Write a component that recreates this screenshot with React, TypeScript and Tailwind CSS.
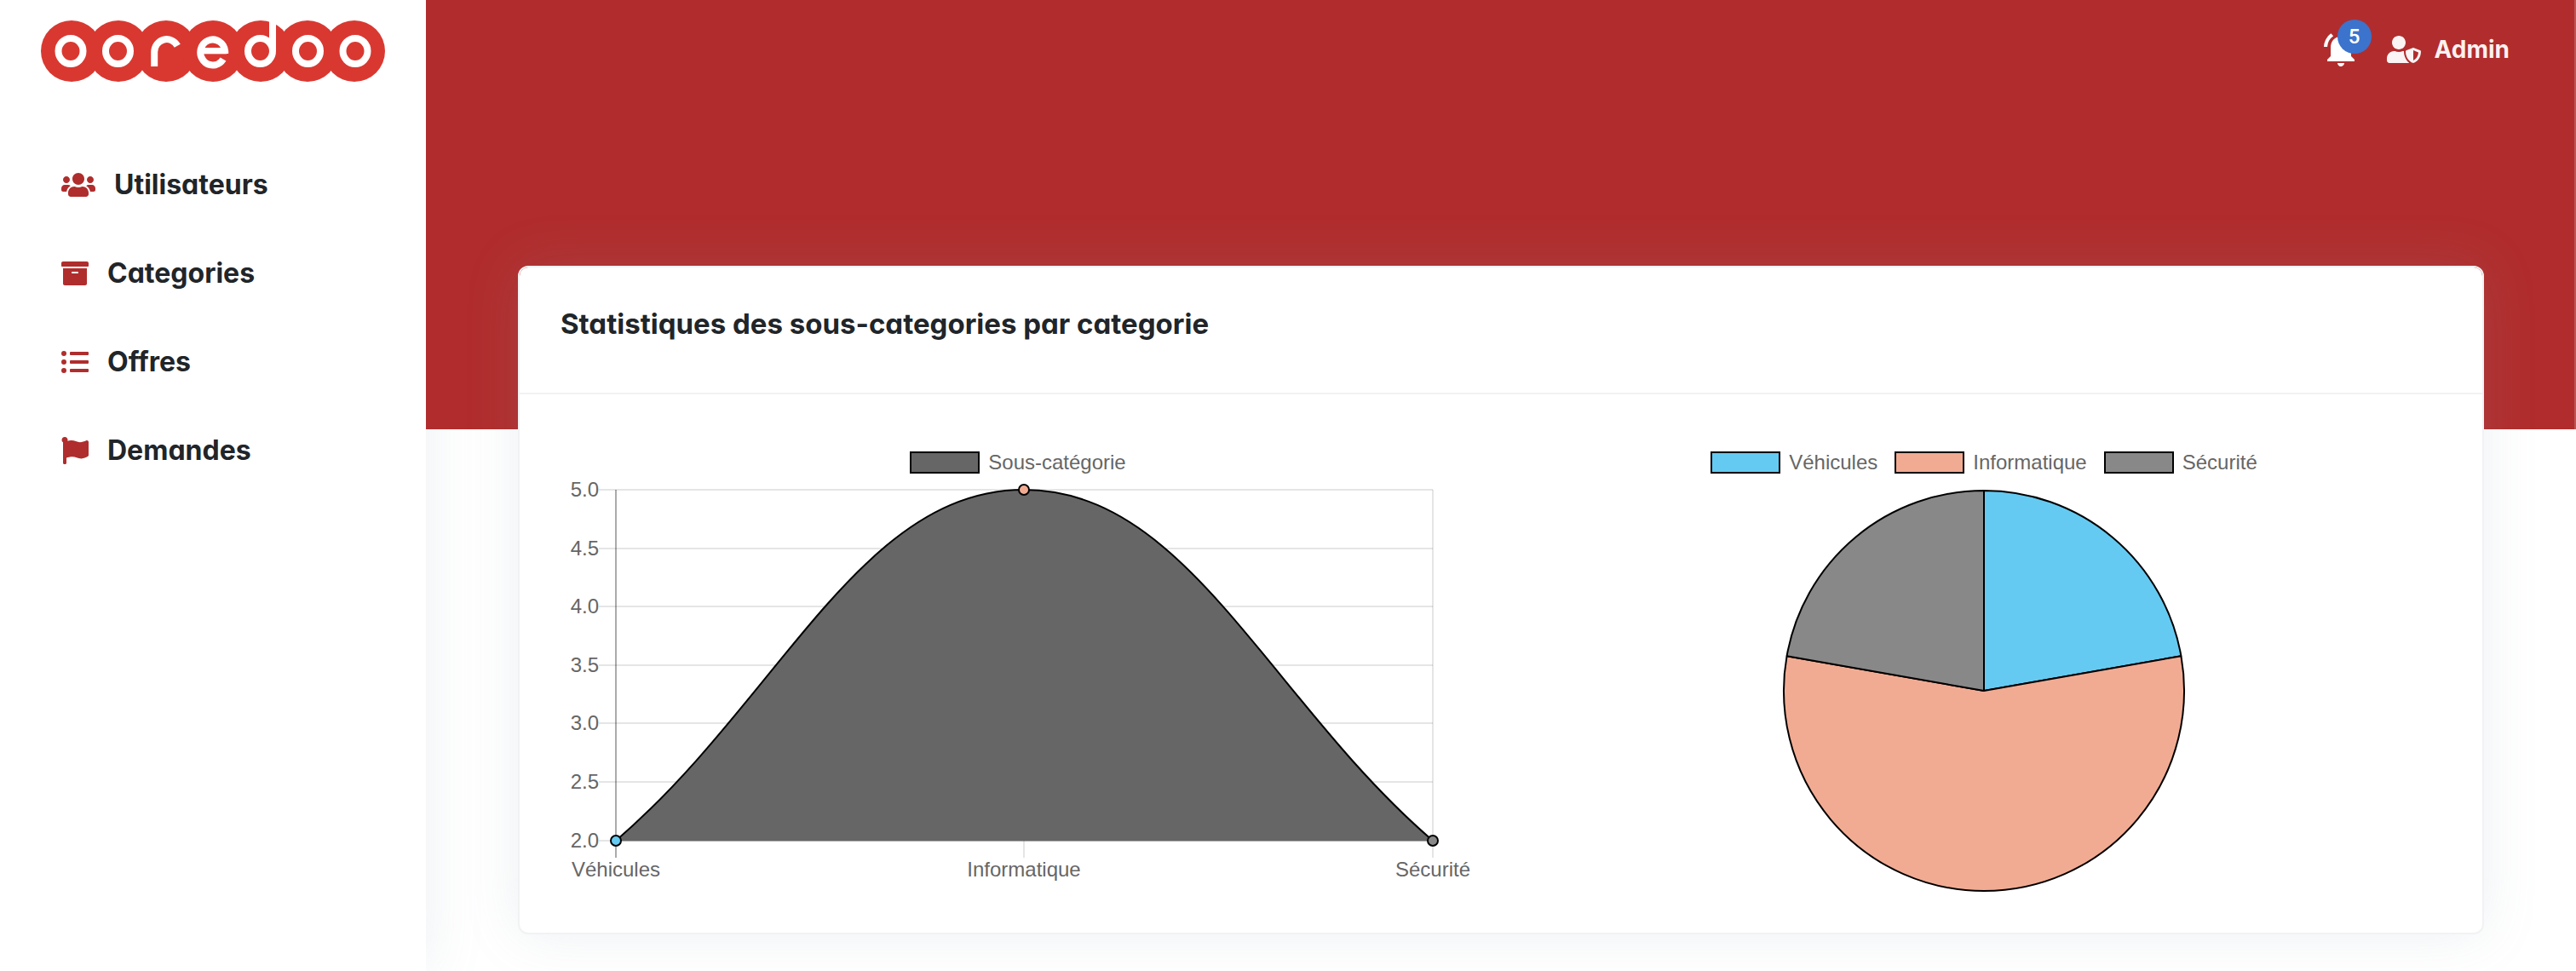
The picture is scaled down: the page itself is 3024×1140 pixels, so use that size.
import type { ReactNode } from "react";
import { FaArchive, FaFlag, FaListUl, FaUserShield, FaUsers } from "react-icons/fa";
import { MdNotificationsActive } from "react-icons/md";

const BLUE = "#65caf1";
const SALMON = "#f2ab93";
const GREY = "#888888";

const navItems = [
  { label: "Utilisateurs", icon: <FaUsers className="h-8 w-10" /> },
  { label: "Categories", icon: <FaArchive className="size-8" /> },
  { label: "Offres", icon: <FaListUl className="size-8" /> },
  { label: "Demandes", icon: <FaFlag className="size-8" /> },
];

function Logo() {
  const discs = [36, 91, 147, 202, 258, 313, 368];
  const rings = [35, 90.5, 257.5, 313.5, 369];
  return (
    <svg viewBox="0 0 404 72" className="h-[72px] w-[404px]" role="img" aria-label="ooredoo">
      {discs.map((x) => (
        <circle key={x} cx={x} cy="36" r="36" fill="#d93831" />
      ))}
      <g fill="none" stroke="#fff" strokeWidth="8">
        {rings.map((x) => (
          <ellipse key={x} cx={x} cy="36" rx="14.5" ry="15" />
        ))}
        <path d="M133.2 54V37A14.5 15 0 0 1 160.3 29.7" />
        <path d="M216.2 39V36A14.5 15 0 1 0 214 45.5" />
        <path d="M190 35.7H218" strokeWidth="7.3" />
        <path d="M272 1V36" />
      </g>
    </svg>
  );
}

function Sidebar() {
  return (
    <aside className="w-[500px] shrink-0 bg-white shadow-[0_0_64px_0_rgba(136,152,170,0.15)]">
      <a href="#" className="mt-6 ml-12 block w-fit">
        <Logo />
      </a>
      <nav className="mt-[69px] flex flex-col">
        {navItems.map((item) => (
          <a
            key={item.label}
            href="#"
            className="flex h-[104px] items-center gap-[22px] pl-[72px] text-[32px] font-bold text-[#212529]"
          >
            <span className="text-[#b02d2d]">{item.icon}</span>
            {item.label}
          </a>
        ))}
      </nav>
    </aside>
  );
}

function Header() {
  return (
    <header className="relative h-[504px] border-r-2 border-[#bd5454] bg-[#b12d2d]">
      <div className="flex items-start justify-end gap-[18px] pt-[34px] pr-[76px] text-white">
        <button type="button" aria-label="Notifications" className="relative w-[60px]">
          <MdNotificationsActive className="size-12" />
          <span className="absolute -top-[11px] right-0 flex size-10 items-center justify-center rounded-full bg-[#3b73cd] font-[Roboto] text-2xl font-medium">
            5
          </span>
        </button>
        <button type="button" className="flex h-12 items-center gap-4 text-[28px] font-bold text-white/95">
          <FaUserShield className="h-8 w-10" />
          Admin
        </button>
      </div>
    </header>
  );
}

function Legend({ items }: { items: { label: string; color: string }[] }) {
  return (
    <ul className="flex h-6 justify-center gap-5">
      {items.map((item) => (
        <li key={item.label} className="flex items-center gap-[10px] text-2xl leading-6 text-[#666]">
          <span className="h-[26px] w-[82px] border-2 border-black" style={{ backgroundColor: item.color }} />
          {item.label}
        </li>
      ))}
    </ul>
  );
}

const yTicks = [
  { label: "5.0", y: 15 },
  { label: "4.5", y: 84 },
  { label: "4.0", y: 152 },
  { label: "3.5", y: 221 },
  { label: "3.0", y: 289 },
  { label: "2.5", y: 358 },
  { label: "2.0", y: 427 },
];
const points = [
  { label: "Véhicules", x: 63, y: 427, color: BLUE },
  { label: "Informatique", x: 542, y: 15, color: SALMON },
  { label: "Sécurité", x: 1022, y: 427, color: GREY },
];
const curve = "M63 427C255 262 350 15 542 15S830 262 1022 427";

function LineChart() {
  return (
    <svg viewBox="0 0 1070 495" className="w-full" fontSize="24" fill="#666" role="img" aria-label="Sous-catégorie">
      <g stroke="#000" strokeOpacity="0.1" strokeWidth="2">
        {yTicks.map((t) => (
          <path key={t.label} d={`M43 ${t.y}H1022`} />
        ))}
        {points.map((p) => (
          <path key={p.label} d={`M${p.x} 15V447`} />
        ))}
      </g>
      <path d="M63 15V447M63 427H1022" stroke="#000" strokeOpacity="0.25" strokeWidth="2" fill="none" />
      <path d={curve} fill="#666" />
      <path d={curve} fill="none" stroke="#000" strokeWidth="2" />
      {points.map((p) => (
        <circle key={p.label} cx={p.x} cy={p.y} r="6" fill={p.color} stroke="#000" strokeWidth="2" />
      ))}
      {yTicks.map((t) => (
        <text key={t.label} x="43" y={t.y + 8} textAnchor="end">
          {t.label}
        </text>
      ))}
      {points.map((p) => (
        <text key={p.label} x={p.x} y="469" textAnchor="middle">
          {p.label}
        </text>
      ))}
    </svg>
  );
}

const slices = [
  { label: "Véhicules", value: 2, color: BLUE },
  { label: "Informatique", value: 5, color: SALMON },
  { label: "Sécurité", value: 2, color: GREY },
];

function PieChart() {
  const total = slices.reduce((sum, s) => sum + s.value, 0);
  const at = (v: number) => {
    const a = (v / total) * 2 * Math.PI;
    return `${535 + 235 * Math.sin(a)} ${251 - 235 * Math.cos(a)}`;
  };
  let start = 0;
  return (
    <svg viewBox="0 0 1070 495" className="w-full" role="img" aria-label="Répartition">
      {slices.map((s) => {
        const from = start;
        start += s.value;
        const large = s.value / total > 0.5 ? 1 : 0;
        return (
          <path
            key={s.label}
            d={`M535 251L${at(from)}A235 235 0 ${large} 1 ${at(start)}Z`}
            fill={s.color}
            stroke="#000"
            strokeWidth="2"
            strokeLinejoin="bevel"
          />
        );
      })}
    </svg>
  );
}

function ChartPanel({ legend, children }: { legend: { label: string; color: string }[]; children: ReactNode }) {
  return (
    <div className="flex min-w-0 flex-col gap-[5px]">
      <Legend items={legend} />
      {children}
    </div>
  );
}

export default function App() {
  return (
    <div className="flex min-h-screen bg-white font-[Inter,sans-serif] [font-feature-settings:'cv11']">
      <Sidebar />
      <div className="min-w-0 flex-1">
        <Header />
        <main className="relative -mt-48 px-[108px] pb-11">
          <section className="rounded-xl border-2 border-[#f1f2f4] bg-white bg-clip-padding shadow-[0_0_64px_0_rgba(136,152,170,0.15)]">
            <h1 className="border-b-2 border-[#f1f2f4] px-12 pt-[46px] pb-[61px] text-[33px] leading-10 font-bold text-[#212529]">
              Statistiques des sous-categories par categorie
            </h1>
            <div className="grid grid-cols-2 gap-16 px-[50px] pt-[68px] pb-10 font-['Liberation_Sans',sans-serif]">
              <ChartPanel legend={[{ label: "Sous-catégorie", color: "#666666" }]}>
                <LineChart />
              </ChartPanel>
              <ChartPanel legend={slices}>
                <PieChart />
              </ChartPanel>
            </div>
          </section>
        </main>
      </div>
    </div>
  );
}
